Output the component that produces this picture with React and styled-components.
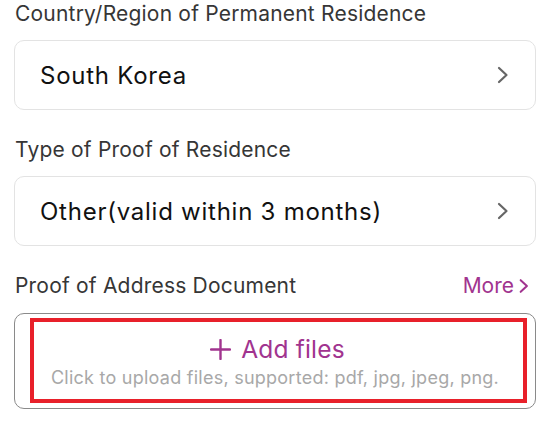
import React from "react";
import styled, { createGlobalStyle } from "styled-components";

const Global = createGlobalStyle`
  html, body { margin: 0; padding: 0; background: #fff; }
  body { font-family: Inter, "Noto Sans", sans-serif; -webkit-font-smoothing: antialiased; }
`;

const Page = styled.div`
  width: 551px;
  height: 425px;
  box-sizing: border-box;
  padding: 0 15px 0 14px;
  display: flex;
  flex-direction: column;
  overflow: hidden;
`;

const Field = styled.div`
  display: flex;
  flex-direction: column;
  gap: ${(p) => p.$gap || 12}px;
  margin-bottom: ${(p) => p.$mb || 0}px;
`;

const LabelRow = styled.div`
  display: flex;
  align-items: center;
  justify-content: space-between;
  height: 28px;
  padding-left: 1px;
`;

const Label = styled.div`
  font-size: 21px;
  line-height: 28px;
  color: #363636;
  letter-spacing: 0.2px;
`;

const More = styled.div`
  display: flex;
  align-items: center;
  gap: 5px;
  font-size: 21px;
  line-height: 28px;
  color: #a1348f;
  padding-right: 7px;
`;

const Select = styled.div`
  height: 70px;
  box-sizing: border-box;
  border: 1px solid #e3e3e3;
  border-radius: 10px;
  display: flex;
  align-items: center;
  justify-content: space-between;
  padding: 0 26px 0 25px;
`;

const Value = styled.div`
  font-size: 24px;
  color: #111;
  letter-spacing: 0.75px;
`;

const Upload = styled.div`
  position: relative;
  height: 96px;
  box-sizing: border-box;
  border: 1.5px solid #8a8a8a;
  border-radius: 10px;
  display: flex;
  flex-direction: column;
  align-items: center;
  justify-content: center;
  gap: 3px;
  padding-top: 1px;
`;

const AddRow = styled.div`
  display: flex;
  align-items: center;
  gap: 10px;
  margin-left: 5px;
  color: #a1348f;
  font-size: 24.5px;
  line-height: 30px;
  letter-spacing: 0.2px;
`;

const Hint = styled.div`
  color: #a8a8a8;
  font-size: 18px;
  line-height: 22px;
  letter-spacing: 0.25px;
`;

const Highlight = styled.div`
  position: absolute;
  left: 15px;
  right: 8px;
  top: 4px;
  bottom: 5px;
  border: 4px solid #e8202a;
  pointer-events: none;
`;

const Chevron = ({ color = "#666", w = 12, h = 18, sw = 2.2 }) => (
  <svg width={w} height={h} viewBox="0 0 12 18" fill="none">
    <path d="M2 2 L9.5 9 L2 16" stroke={color} strokeWidth={sw} strokeLinecap="round" strokeLinejoin="round" />
  </svg>
);

const Plus = () => (
  <svg width="21" height="21" viewBox="0 0 21 21">
    <path d="M10.5 1 V20 M1 10.5 H20" stroke="#a1348f" strokeWidth="2.4" strokeLinecap="round" />
  </svg>
);

export default function App() {
  return (
    <>
      <Global />
      <Page>
        <Field $mb={26}>
          <LabelRow>
            <Label>Country/Region of Permanent Residence</Label>
          </LabelRow>
          <Select>
            <Value>South Korea</Value>
            <Chevron />
          </Select>
        </Field>
        <Field $mb={26}>
          <LabelRow>
            <Label>Type of Proof of Residence</Label>
          </LabelRow>
          <Select>
            <Value>Other(valid within 3 months)</Value>
            <Chevron />
          </Select>
        </Field>
        <Field $gap={13}>
          <LabelRow>
            <Label>Proof of Address Document</Label>
            <More>
              More
              <Chevron color="#a1348f" w={10} h={16} sw={2.4} />
            </More>
          </LabelRow>
          <Upload>
            <AddRow>
              <Plus />
              Add files
            </AddRow>
            <Hint>Click to upload files, supported: pdf, jpg, jpeg, png.</Hint>
            <Highlight />
          </Upload>
        </Field>
      </Page>
    </>
  );
}
